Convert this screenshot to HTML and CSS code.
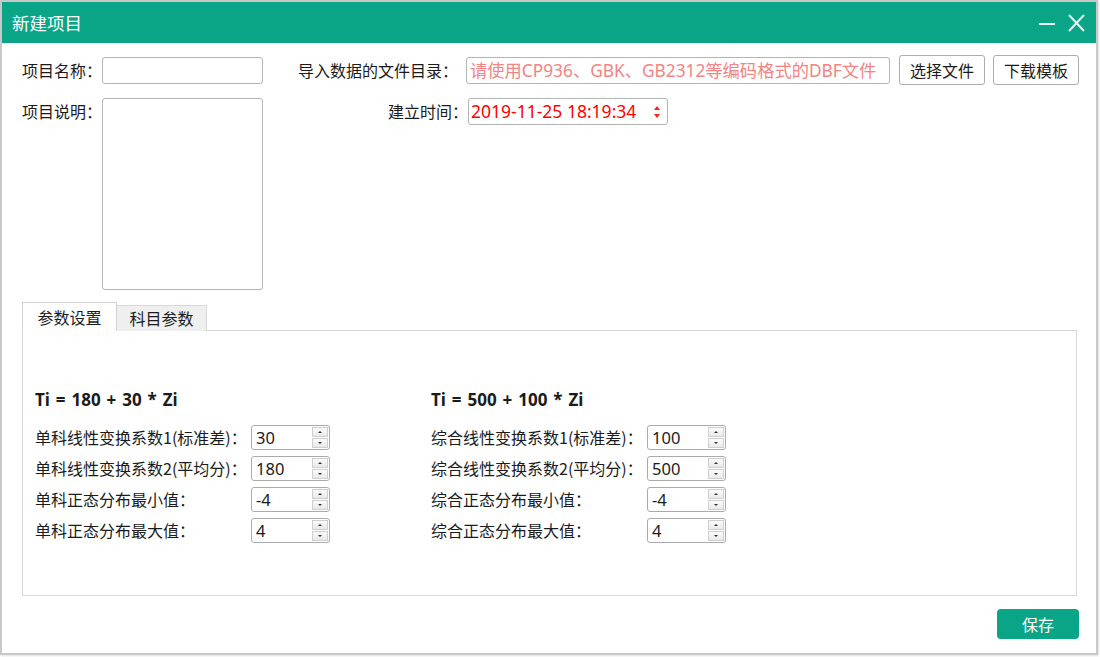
FILE: index.html
```html
<!DOCTYPE html>
<html lang="zh-CN">
<head>
<meta charset="utf-8">
<title>新建项目</title>
<link rel="stylesheet" href="styles.css">
</head>
<body>
<div class="window">
  <div class="titlebar">
    <span class="title">新建项目</span>
    <div class="win-ctrls">
      <svg class="ic-min" width="16" height="18" viewBox="0 0 16 18"><rect x="0" y="9" width="16" height="2" fill="#e8f7f3"/></svg>
      <svg class="ic-close" width="17" height="18" viewBox="0 0 17 18"><path d="M1 1 L16 17 M16 1 L1 17" stroke="#e8f7f3" stroke-width="2" fill="none"/></svg>
    </div>
  </div>
  <div class="content">
    <div class="row row1">
      <span class="lbl lbl-left">项目名称：</span>
      <div class="field name-field"></div>
      <span class="lbl lbl-dir">导入数据的文件目录：</span>
      <div class="field dir-field">请使用CP936、GBK、GB2312等编码格式的DBF文件</div>
      <button class="btn btn-first">选择文件</button>
      <button class="btn">下载模板</button>
    </div>
    <div class="row row2">
      <span class="lbl lbl-left lbl-top">项目说明：</span>
      <div class="field textarea"></div>
      <span class="lbl lbl-time lbl-top">建立时间：</span>
      <div class="field datetime">
        <span class="dt-text">2019-11-25 18:19:34</span>
        <span class="dt-spin">
          <svg width="6" height="4" viewBox="0 0 6 4"><path d="M0 4 L3 0 L6 4 Z" fill="#ff2020"/></svg>
          <svg width="6" height="4" viewBox="0 0 6 4"><path d="M0 0 L3 4 L6 0 Z" fill="#ff2020"/></svg>
        </span>
      </div>
    </div>

    <div class="tabs">
      <div class="tab tab-active">参数设置</div>
      <div class="tab">科目参数</div>
    </div>
    <div class="panel">
      <div class="col">
        <div class="formula">Ti = 180 + 30 * Zi</div>
        <div class="prow"><span class="plbl">单科线性变换系数1(标准差)：</span><div class="spin"><span class="sval">30</span><span class="sbtns"><span class="sb sb-up"></span><span class="sb sb-down"></span></span></div></div>
        <div class="prow"><span class="plbl">单科线性变换系数2(平均分)：</span><div class="spin"><span class="sval">180</span><span class="sbtns"><span class="sb sb-up"></span><span class="sb sb-down"></span></span></div></div>
        <div class="prow"><span class="plbl">单科正态分布最小值：</span><div class="spin"><span class="sval">-4</span><span class="sbtns"><span class="sb sb-up"></span><span class="sb sb-down"></span></span></div></div>
        <div class="prow"><span class="plbl">单科正态分布最大值：</span><div class="spin"><span class="sval">4</span><span class="sbtns"><span class="sb sb-up"></span><span class="sb sb-down"></span></span></div></div>
      </div>
      <div class="col">
        <div class="formula">Ti = 500 + 100 * Zi</div>
        <div class="prow"><span class="plbl">综合线性变换系数1(标准差)：</span><div class="spin"><span class="sval">100</span><span class="sbtns"><span class="sb sb-up"></span><span class="sb sb-down"></span></span></div></div>
        <div class="prow"><span class="plbl">综合线性变换系数2(平均分)：</span><div class="spin"><span class="sval">500</span><span class="sbtns"><span class="sb sb-up"></span><span class="sb sb-down"></span></span></div></div>
        <div class="prow"><span class="plbl">综合正态分布最小值：</span><div class="spin"><span class="sval">-4</span><span class="sbtns"><span class="sb sb-up"></span><span class="sb sb-down"></span></span></div></div>
        <div class="prow"><span class="plbl">综合正态分布最大值：</span><div class="spin"><span class="sval">4</span><span class="sbtns"><span class="sb sb-up"></span><span class="sb sb-down"></span></span></div></div>
      </div>
    </div>
    <div class="footer">
      <button class="save">保存</button>
    </div>
  </div>
</div>
</body>
</html>
```
FILE: styles.css
```css
* { box-sizing: border-box; }
html, body { margin: 0; padding: 0; background: #ffffff; }
body {
  font-family: "Noto Sans", "Noto Sans CJK SC", sans-serif;
  font-size: 16px;
  color: #1b1b1b;
  width: 1100px;
  height: 657px;
  overflow: hidden;
}
.window {
  width: 1098px;
  height: 655px;
  border: 2px solid #c8c8c8;
  background: #ffffff;
  box-shadow: 1px 1px 2px rgba(0,0,0,0.12);
}
.titlebar {
  height: 41px;
  background: #0aa586;
  display: flex;
  align-items: center;
  justify-content: space-between;
  padding: 0 11px 0 10px;
}
.title {
  color: #ffffff;
  font-size: 17.5px;
  line-height: 22px;
  font-family: "Noto Sans CJK SC", sans-serif;
}
.win-ctrls { display: flex; align-items: center; gap: 13px; padding-top: 1px; }
.win-ctrls svg { display: block; }

.content { padding: 12px 17px 0 20px; }
.row { display: flex; }
.row1 { height: 30px; align-items: center; }
.row2 { margin-top: 13px; align-items: flex-start; }
.lbl {
  font-family: "Noto Sans CJK SC", sans-serif;
  font-size: 16px;
  line-height: 27px;
  white-space: nowrap;
  display: block;
}
.lbl-left { width: 80px; }
.lbl-dir { margin-left: 35px; width: 168px; }
.lbl-time { margin-left: 125px; width: 80px; }
.field {
  border: 1px solid #b4b4b4;
  border-radius: 3px;
  background: #ffffff;
  height: 27px;
}
.name-field { width: 161px; }
.dir-field {
  width: 424px;
  color: #f48383;
  font-size: 17.3px;
  line-height: 25px;
  padding-left: 3px;
  white-space: nowrap;
  overflow: hidden;
}
.btn {
  font-family: "Noto Sans CJK SC", sans-serif;
  font-size: 16px;
  color: #1b1b1b;
  width: 86px;
  height: 30px;
  border: 1px solid #adadad;
  border-radius: 3px;
  background: #ffffff;
  margin-left: 8px;
  padding: 0;
  line-height: 28px;
}
.btn-first { margin-left: 9px; }
.textarea { width: 161px; height: 192px; }
.datetime {
  width: 200px;
  display: flex;
  align-items: center;
  justify-content: space-between;
  padding: 0 7px 0 2px;
  color: #ff0000;
  font-size: 17.5px;
  line-height: 25px;
}
.dt-spin { display: flex; flex-direction: column; gap: 4px; }
.dt-spin svg { display: block; }

.tabs { display: flex; align-items: flex-end; margin-top: 12px; height: 29px; position: relative; z-index: 1; margin-bottom: -1px; }
.tab {
  font-family: "Noto Sans CJK SC", sans-serif;
  font-size: 16px;
  width: 90px;
  height: 26px;
  line-height: 25px;
  text-align: center;
  background: #efefef;
  border: 1px solid #d8d8d8;
  border-left: none;
  border-bottom: none;
}
.tab-active {
  width: 95px;
  height: 29px;
  line-height: 29px;
  background: #ffffff;
  border: 1px solid #d0d0d0;
  border-bottom: 1px solid #ffffff;
}
.panel {
  width: 1055px;
  height: 266px;
  border: 1px solid #d9d9d9;
  display: flex;
  padding: 58px 0 0 12px;
}
.col { width: 396px; }
.formula {
  font-weight: bold;
  font-size: 17px;
  word-spacing: 1.5px;
  line-height: 22px;
  margin-bottom: 14px;
}
.prow { display: flex; align-items: center; height: 25px; margin-bottom: 6px; }
.plbl {
  font-family: "Noto Sans CJK SC", sans-serif;
  font-size: 16px;
  width: 216px;
  white-space: nowrap;
  line-height: 25px;
}
.spin {
  width: 79px;
  height: 25px;
  border: 1px solid #ababab;
  border-radius: 3px;
  display: flex;
  justify-content: space-between;
  align-items: stretch;
  padding: 1px 1px 1px 4px;
}
.sval { font-size: 16.5px; line-height: 21px; }
.sbtns { display: flex; flex-direction: column; gap: 1px; width: 16px; }
.sb {
  flex: 1;
  border: 1px solid #cfcfcf;
  background: linear-gradient(#fbfbfb, #e9e9e9);
  position: relative;
}
.sb::after {
  content: "";
  position: absolute;
  left: 5px;
  top: 3px;
  border-left: 2px solid transparent;
  border-right: 2px solid transparent;
}
.sb-up::after { border-bottom: 2px solid #333; }
.sb-down::after { border-top: 2px solid #333; }

.footer { display: flex; justify-content: flex-end; margin-top: 13px; }
.save {
  width: 82px;
  height: 30px;
  border: none;
  border-radius: 4px;
  background: #0aa586;
  color: #ffffff;
  font-family: "Noto Sans CJK SC", sans-serif;
  font-size: 16px;
  padding: 0;
}
```
